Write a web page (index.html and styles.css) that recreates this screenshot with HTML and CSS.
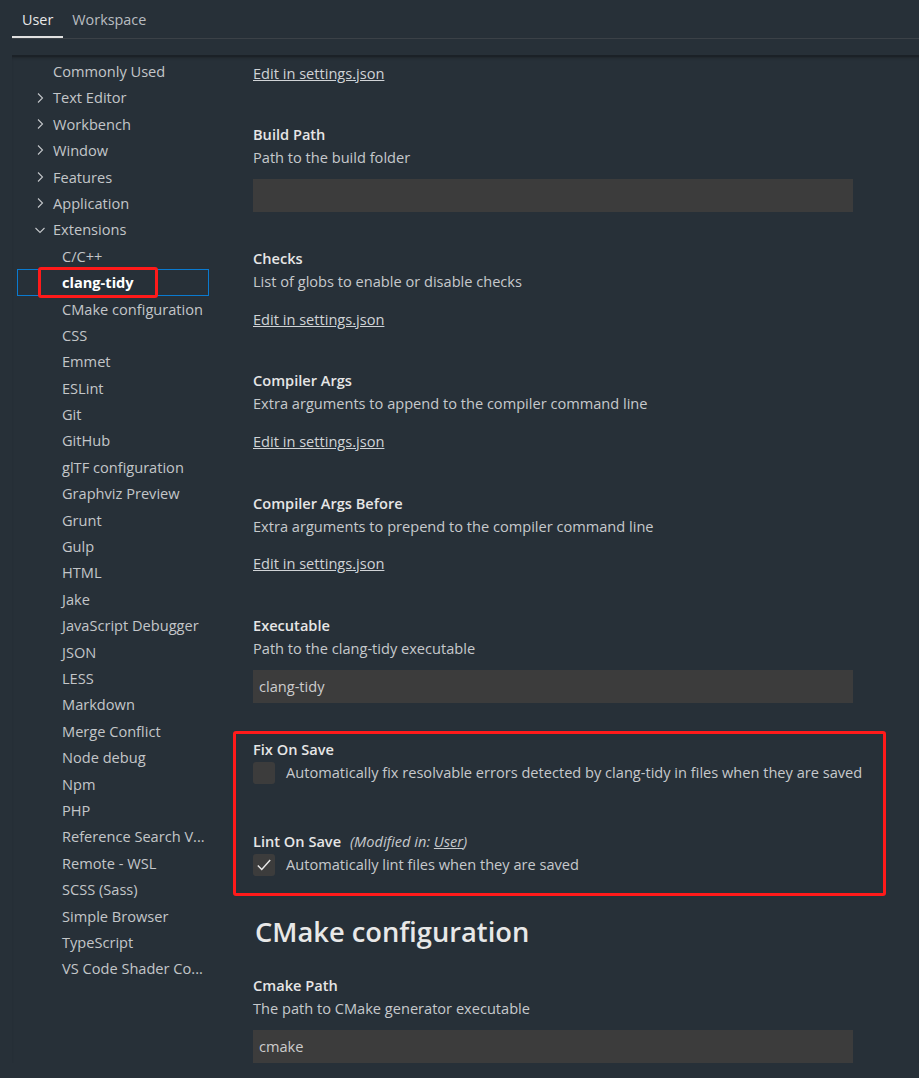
FILE: index.html
```html
<!DOCTYPE html>
<html>
<head>
<meta charset="utf-8">
<link rel="stylesheet" href="styles.css">
</head>
<body>
<div class="tabs">
  <div class="tab active">User</div>
  <div class="tab">Workspace</div>
</div>
<div class="body">
  <nav class="tree">
    <div class="row l1">Commonly Used</div>
    <div class="row l1"><svg class="chev" viewBox="0 0 16 16"><path d="M6 3.5 10.5 8 6 12.5"/></svg>Text Editor</div>
    <div class="row l1"><svg class="chev" viewBox="0 0 16 16"><path d="M6 3.5 10.5 8 6 12.5"/></svg>Workbench</div>
    <div class="row l1"><svg class="chev" viewBox="0 0 16 16"><path d="M6 3.5 10.5 8 6 12.5"/></svg>Window</div>
    <div class="row l1"><svg class="chev" viewBox="0 0 16 16"><path d="M6 3.5 10.5 8 6 12.5"/></svg>Features</div>
    <div class="row l1"><svg class="chev" viewBox="0 0 16 16"><path d="M6 3.5 10.5 8 6 12.5"/></svg>Application</div>
    <div class="row l1"><svg class="chev" viewBox="0 0 16 16"><path d="M3.5 6 8 10.5 12.5 6"/></svg>Extensions</div>
    <div class="row l2">C/C++</div>
    <div class="row l2 selected"><span class="sel-text">clang-tidy</span><span class="mark mark-nav"></span></div>
    <div class="row l2">CMake configuration</div>
    <div class="row l2">CSS</div>
    <div class="row l2">Emmet</div>
    <div class="row l2">ESLint</div>
    <div class="row l2">Git</div>
    <div class="row l2">GitHub</div>
    <div class="row l2">glTF configuration</div>
    <div class="row l2">Graphviz Preview</div>
    <div class="row l2">Grunt</div>
    <div class="row l2">Gulp</div>
    <div class="row l2">HTML</div>
    <div class="row l2">Jake</div>
    <div class="row l2">JavaScript Debugger</div>
    <div class="row l2">JSON</div>
    <div class="row l2">LESS</div>
    <div class="row l2">Markdown</div>
    <div class="row l2">Merge Conflict</div>
    <div class="row l2">Node debug</div>
    <div class="row l2">Npm</div>
    <div class="row l2">PHP</div>
    <div class="row l2">Reference Search V...</div>
    <div class="row l2">Remote - WSL</div>
    <div class="row l2">SCSS (Sass)</div>
    <div class="row l2">Simple Browser</div>
    <div class="row l2">TypeScript</div>
    <div class="row l2">VS Code Shader Co...</div>
  </nav>
  <main class="content">
    <div class="item first">
      <a class="link">Edit in settings.json</a>
    </div>
    <div class="item">
      <div class="title">Build Path</div>
      <div class="desc">Path to the build folder</div>
      <div class="input"></div>
    </div>
    <div class="item">
      <div class="title">Checks</div>
      <div class="desc">List of globs to enable or disable checks</div>
      <a class="link">Edit in settings.json</a>
    </div>
    <div class="item">
      <div class="title">Compiler Args</div>
      <div class="desc">Extra arguments to append to the compiler command line</div>
      <a class="link">Edit in settings.json</a>
    </div>
    <div class="item">
      <div class="title">Compiler Args Before</div>
      <div class="desc">Extra arguments to prepend to the compiler command line</div>
      <a class="link">Edit in settings.json</a>
    </div>
    <div class="item">
      <div class="title">Executable</div>
      <div class="desc">Path to the clang-tidy executable</div>
      <div class="input">clang-tidy</div>
    </div>
    <div class="bools">
      <span class="mark mark-bools"></span>
      <div class="item bool">
        <div class="title">Fix On Save</div>
        <div class="check-row">
          <span class="checkbox"></span>
          <span class="desc">Automatically fix resolvable errors detected by clang-tidy in files when they are saved</span>
        </div>
      </div>
      <div class="item bool">
        <div class="title">Lint On Save <span class="modified">(Modified in: <u>User</u>)</span></div>
        <div class="check-row">
          <span class="checkbox"><svg viewBox="0 0 16 16"><path d="M2.5 8.5 6 12l7.5-8.5"/></svg></span>
          <span class="desc">Automatically lint files when they are saved</span>
        </div>
      </div>
    </div>
    <h2 class="group">CMake configuration</h2>
    <div class="item after-group">
      <div class="title">Cmake Path</div>
      <div class="desc">The path to CMake generator executable</div>
      <div class="input">cmake</div>
    </div>
  </main>
</div>
</body>
</html>
```
FILE: styles.css
```css
html, body {
  margin: 0;
  padding: 0;
  background: #273038;
  height: 100%;
  overflow: hidden;
}
body {
  font-family: "Segoe UI", "Open Sans", "Noto Sans", sans-serif;
  font-size: 14.6px;
  color: #cccccc;
}
.tabs {
  display: flex;
  height: 38px;
  margin-left: 12px;
  border-bottom: 1px solid #3b4147;
  align-items: stretch;
}
.tab {
  padding: 0 10px;
  line-height: 39px;
  color: #b9bdc1;
  font-size: 14.4px;
}
.tab + .tab { padding-left: 9px; }
.tab.active {
  color: #e8e8e8;
  box-shadow: inset 0 -2px 0 #e0e0e0;
}
.body {
  display: flex;
  margin-top: 16px;
  border-top: 2px solid #1b2127;
  margin-left: 12px;
  padding-top: 1px;
  box-shadow: inset 0 2px 3px -1px #1f252b;
}
.tree {
  width: 192px;
  margin-left: 5px;
  flex: none;
}
.row {
  height: 26.4px;
  line-height: 26.4px;
  white-space: nowrap;
  display: flex;
  align-items: center;
  color: #c3c6c9;
  position: relative;
}
.row.l1 { padding-left: 36px; }
.row.l2 { padding-left: 45px; }
.chev {
  width: 16px;
  height: 16px;
  margin-left: -21px;
  margin-right: 5px;
  fill: none;
  stroke: #c3c6c9;
  stroke-width: 1.1;
}
.row.selected {
  outline: 1px solid #0a7ad0;
  outline-offset: -1px;
  font-weight: 700;
  color: #ffffff;
}
.mark {
  position: absolute;
  border: 3px solid #ff1a1a;
  border-radius: 3px;
  pointer-events: none;
}
.mark-nav {
  left: 21px;
  top: -2px;
  width: 114px;
  height: 25px;
}
.content {
  flex: 1;
  margin-left: 44px;
  padding-top: 3.5px;
  padding-right: 66px;
  min-width: 0;
}
.item {
  padding-top: 34.8px;
  display: flex;
  flex-direction: column;
  align-items: flex-start;
}
.item.first { padding-top: 0; }
.title {
  line-height: 23px;
  font-weight: 600;
  color: #e6e6e6;
  white-space: nowrap;
}
.desc {
  line-height: 23.5px;
  color: #c6c9cc;
  white-space: nowrap;
}
.link {
  line-height: 23px;
  margin-top: 14px;
  margin-bottom: 4px;
  text-decoration: underline;
  color: #d0d3d6;
}
.item.first .link { margin-top: 0; }
.input {
  align-self: stretch;
  margin-top: 9.5px;
  height: 33px;
  line-height: 33px;
  background: #3c3c3c;
  padding-left: 6px;
  color: #cccccc;
}
.bools {
  position: relative;
}
.mark-bools {
  left: -20px;
  top: 28px;
  width: 647px;
  height: 159px;
}
.item.bool + .item.bool { padding-top: 45.5px; }
.check-row {
  display: flex;
  align-items: center;
  gap: 11px;
  margin-top: 0;
}
.checkbox {
  width: 22px;
  height: 22px;
  border-radius: 3px;
  background: #3c3c3c;
  flex: none;
  display: flex;
  align-items: center;
  justify-content: center;
}
.checkbox svg {
  width: 18px;
  height: 18px;
  fill: none;
  stroke: #e8e8e8;
  stroke-width: 1.3;
}
.modified {
  font-weight: 400;
  font-style: italic;
  color: #c6c9cc;
  margin-left: 5px;
}
.modified u { text-decoration: underline; }
.group {
  margin: 36px 0 0 2px;
  font-size: 27.3px;
  line-height: 40px;
  font-weight: 600;
  color: #e8e8e8;
}
.item.after-group { padding-top: 21.5px; }
```
